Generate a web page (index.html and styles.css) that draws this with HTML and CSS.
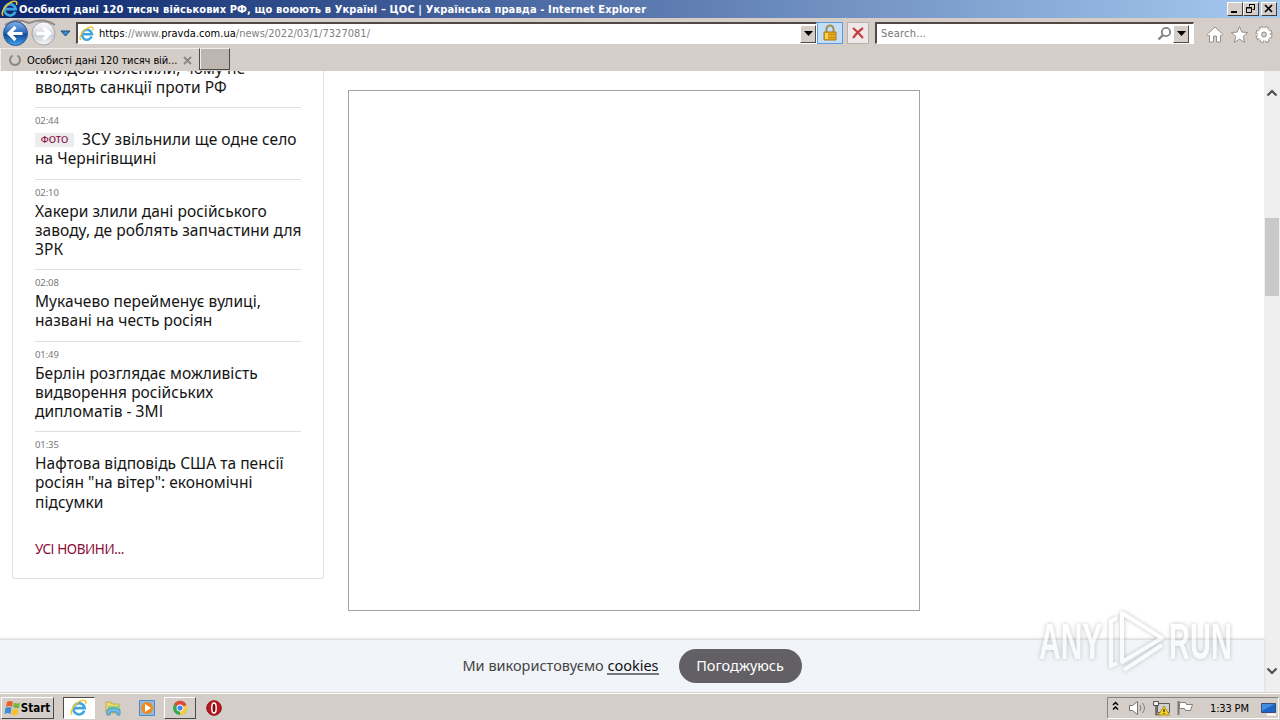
FILE: index.html
```html
<!DOCTYPE html>
<html lang="uk">
<head>
  <meta charset="UTF-8">
  <title>Особисті дані 120 тисяч військових РФ, що воюють в Україні – ЦОС | Українська правда</title>
  <link rel="stylesheet" href="styles.css">
</head>
<body>
  <svg class="defs" width="0" height="0">
    <defs>
      <linearGradient id="blueBall" x2="0" y2="1">
        <stop offset="0" stop-color="#7db1e8"/>
        <stop offset=".48" stop-color="#2a68bd"/>
        <stop offset=".52" stop-color="#114792"/>
        <stop offset="1" stop-color="#41a4ef"/>
      </linearGradient>
      <linearGradient id="greyBall" x2="0" y2="1">
        <stop offset="0" stop-color="#ffffff"/>
        <stop offset=".45" stop-color="#d9dce0"/>
        <stop offset=".6" stop-color="#c9cdd2"/>
        <stop offset="1" stop-color="#f8f9fa"/>
      </linearGradient>
      <symbol id="ie" viewBox="0 0 18 18">
        <path d="M14.3 11.8A5.6 5.6 0 1 1 14.6 9.2H4.5" fill="none" stroke="#3fa5e2" stroke-width="2.7"/>
        <path d="M2.2 15.8C-1 13 4.5 4.2 11 1.7c4-1.5 5.6.2 4.4 3.3" fill="none" stroke="#f2c62f" stroke-width="1.5"/>
      </symbol>
    </defs>
  </svg>

  <header class="titlebar">
    <svg class="title-ie" width="18" height="18"><use href="#ie"/></svg>
    <span class="title-text">Особисті дані 120 тисяч військових РФ, що воюють в Україні – ЦОС | Українська правда - Internet Explorer</span>
    <div class="win-buttons">
      <span class="win-btn"><svg width="13" height="11"><path d="M3 8h6v2H3z"/></svg></span>
      <span class="win-btn"><svg width="13" height="11" fill="none" stroke="#000"><path d="M5.5 3.5v-2h5v5h-2M5 1.5h6M2.5 4.5h5v5h-5zM2 5h6"/></svg></span>
      <span class="win-btn win-close"><svg width="13" height="11"><path d="M3 2l7 7M10 2l-7 7" stroke="#000" stroke-width="1.7"/></svg></span>
    </div>
  </header>

  <nav class="navbar">
    <svg class="nav-balls" width="72" height="30">
      <path d="M4 7Q15-1 28 5Q43-1 54 7" fill="none" stroke="#8f8a87" stroke-width="2"/>
      <circle cx="14.5" cy="15.5" r="12" fill="url(#blueBall)" stroke="#2b548e"/>
      <path d="M8 15.5h13.5M14.5 9L8 15.5l6.5 6.5" fill="none" stroke="#fff" stroke-width="3.2"/>
      <circle cx="42.5" cy="15.5" r="11.5" fill="url(#greyBall)" stroke="#9fa3a9"/>
      <path d="M35.5 15.5h13M42.5 9.5l6 6-6 6" fill="none" stroke="#fff" stroke-width="3.4"/>
      <path d="M60 13h9l-4.5 5z" fill="#3b8bc9" stroke="#174a7c"/>
    </svg>
    <div class="address">
      <svg width="16" height="16"><use href="#ie"/></svg>
      <span class="url">https<i>://www.</i>pravda.com.ua<i>/news/2022/03/1/7327081/</i></span>
      <span class="drop"><svg width="9" height="5"><path d="M0 0h9L4.5 5z"/></svg></span>
    </div>
    <div class="lock">
      <svg width="16" height="18"><path d="M4.5 9V5a3.5 3.5 0 0 1 7 0v4" fill="none" stroke="#a38c4d" stroke-width="2"/><path d="M2 8h12v8H2z" fill="#e5aa1d" stroke="#a87814"/><path d="M2 10.5h12M2 13.5h12" stroke="#c88d12"/><path d="M3 9h3v6H3z" fill="#f5cf58"/></svg>
    </div>
    <div class="stop">
      <svg width="14" height="14"><path d="M2 2q5 4 10 10M12 2Q6 6 2 12" fill="none" stroke="#c43d43" stroke-width="2.2"/></svg>
    </div>
    <div class="search">
      <span class="search-text">Search...</span>
      <svg width="16" height="16"><circle cx="9" cy="6" r="4.2" fill="none" stroke="#85817f" stroke-width="1.8"/><path d="M6 9L1.5 13.5" stroke="#85817f" stroke-width="2.4"/></svg>
      <span class="drop"><svg width="9" height="5"><path d="M0 0h9L4.5 5z"/></svg></span>
    </div>
    <svg class="tools" width="68" height="20" fill="#fff" stroke="#96918e">
      <path d="M1 10.5L9 3l8 7.5-1.5 1.5-1-1V18h-4v-6h-3v6h-4v-7l-1 1z"/>
      <path d="M33.5 2.5l2.3 5.6 6 .4-4.6 3.9 1.5 6-5.2-3.3-5.2 3.3 1.5-6-4.6-3.9 6-.4z"/>
      <circle cx="58" cy="10.5" r="6.3" stroke-width="4.6" stroke-dasharray="3.3 1.648"/>
      <circle cx="58" cy="10.5" r="6" stroke="#fff" stroke-width="3.2" stroke-dasharray="2 2.712" stroke-dashoffset="-.6"/>
      <circle cx="58" cy="10.5" r="5" stroke="#fff"/>
      <circle cx="58" cy="10.5" r="2.5" fill="#d5cec8"/>
    </svg>
  </nav>

  <div class="tabs">
    <div class="tab">
      <svg width="12" height="12"><path d="M3.5 1.7a5 5 0 1 0 5 0" fill="none" stroke="#8d8987" stroke-width="2"/></svg>
      <span class="tab-text">Особисті дані 120 тисяч вій...</span>
      <svg class="tab-close" width="9" height="9"><path d="M1 1l7 7M8 1L1 8" stroke="#8b8683" stroke-width="1.8"/></svg>
    </div>
    <div class="new-tab"></div>
  </div>

  <main class="viewport">
    <div class="page">
      <section class="news">
        <article>
          <h3>Молдові пояснили, чому не<br>вводять санкції проти РФ</h3>
        </article>
        <article>
          <time>02:44</time>
          <h3><b class="photo">ФОТО</b>ЗСУ звільнили ще одне село<br>на Чернігівщині</h3>
        </article>
        <article>
          <time>02:10</time>
          <h3>Хакери злили дані російського<br>заводу, де роблять запчастини для<br>ЗРК</h3>
        </article>
        <article>
          <time>02:08</time>
          <h3>Мукачево перейменує вулиці,<br>названі на честь росіян</h3>
        </article>
        <article>
          <time>01:49</time>
          <h3>Берлін розглядає можливість<br>видворення російських<br>дипломатів - ЗМІ</h3>
        </article>
        <article>
          <time>01:35</time>
          <h3>Нафтова відповідь США та пенсії<br>росіян "на вітер": економічні<br>підсумки</h3>
        </article>
        <a class="all-news">УСІ НОВИНИ...</a>
      </section>
      <div class="frame"></div>
    </div>
    <div class="scrollbar">
      <svg width="12" height="8"><path d="M1.5 6.5L6 2l4.5 4.5" fill="none" stroke="#505050" stroke-width="2.2"/></svg>
      <div class="thumb"></div>
      <svg class="down" width="12" height="8"><path d="M1.5 1.5L6 6l4.5-4.5" fill="none" stroke="#505050" stroke-width="2.2"/></svg>
    </div>
    <div class="cookies">
      <span class="cookie-text">Ми використовуємо <u>cookies</u></span>
      <button>Погоджуюсь</button>
    </div>
    <div class="watermark">
      <span class="any">ANY</span>
      <svg width="60" height="66" viewBox="0 0 60 66" fill="none" stroke="#fff" stroke-width="4" stroke-linejoin="round">
        <path d="M14 4L54 29 14 53z"/>
        <path d="M9 9L3 12V57L9 54M16 61L54 36"/>
      </svg>
      <span class="run">RUN</span>
    </div>
  </main>

  <footer class="taskbar">
    <div class="start">
      <svg width="18" height="18"><path d="M4 3q3-2 6 0L9 8Q6 6 3 8z" fill="#e9602b"/><path d="M11 3.5q3 2 6 0L16 9q-3 1-6-1z" fill="#78b644"/><path d="M2.5 9q3-2 6 0l-1 6q-3-2-6 0z" fill="#3d8bd1"/><path d="M9.5 9.5q3 2 6 0l-1 6q-3 2-6 0z" fill="#f4c22f"/></svg>
      <b>Start</b>
    </div>
    <div class="task active"><svg width="18" height="18"><use href="#ie"/></svg></div>
    <div class="task"><svg width="18" height="18"><path d="M2 3h5l1 2h7v9H2z" fill="#edd777" stroke="#c5a94b"/><path d="M4 7h12v3H4z" fill="#8dd07f"/><path d="M3 16v-5q6-4 13 0v5h-3v-3H6v3z" fill="#72bee2" stroke="#4a94bd"/></svg></div>
    <div class="task"><svg width="18" height="18"><path d="M1.5 1.5h15v15h-15z" fill="#8ebbe6" stroke="#5489bf"/><circle cx="9" cy="9" r="6" fill="#f18a1b"/><path d="M7 5l6 4-6 4z" fill="#fff"/></svg></div>
    <div class="task raised"><svg width="18" height="18"><circle cx="9" cy="9" r="7" fill="#34a853"/><path d="M9 9L3 5.3A7 7 0 0 1 15.5 6z" fill="#df4938"/><path d="M9 9l6.5-3A7 7 0 0 1 9 16z" fill="#f9cc3a"/><circle cx="9" cy="9" r="3.5" fill="#fff"/><circle cx="9" cy="9" r="2.6" fill="#4285f4"/></svg></div>
    <div class="task opera"><svg width="18" height="18"><circle cx="9" cy="9" r="7.3" fill="#bb1720" stroke="#85141a"/><ellipse cx="9" cy="9" rx="2.2" ry="5" fill="#7a0c12" stroke="#fff" stroke-width="1.5"/></svg></div>
    <div class="tray">
      <svg width="90" height="18" fill="none">
        <path d="M2 6l2.5-2.5L7 6M2 10.5L4.5 8 7 10.5" stroke="#000" stroke-width="1.5"/>
        <path d="M18.5 6.5h3l5-4v13l-5-4h-3z" fill="#fff" stroke="#77736f"/><path d="M29 6q2 3 0 6M31.5 4q4 5 0 10" stroke="#85817d"/>
        <path d="M46.5 4.5h12v9h-12z" fill="#cfd0cf" stroke="#5c5a58"/><path d="M42.5 2.5h5v4h-5z" fill="#eee" stroke="#555"/><path d="M45 7v8.500h5" stroke="#555" stroke-width="1.5"/><path d="M53 7l5.5 9h-11z" fill="#f4d22b" stroke="#b79610"/><path d="M53 10v3M53 14v1" stroke="#000"/>
        <path d="M67.5 2v14" stroke="#777" stroke-width="2"/><path d="M68.5 3.5h6l1 2h6l-2 6h-5l-1-2h-5z" fill="#fff" stroke="#84807d"/>
      </svg>
      <span class="clock">1:33 PM</span>
      <svg class="desktop" width="17" height="15"><path d="M1.5 2.5h14v9h-14z" fill="#1e66c5" stroke="#37507b"/><path d="M2 3h12L2 10z" fill="#438ee0"/><path d="M7 13.5h9" stroke="#fff" stroke-width="2"/></svg>
    </div>
  </footer>
</body>
</html>
```
FILE: styles.css
```css
* {
  box-sizing: border-box;
}

body {
  margin: 0;
  width: 1280px;
  height: 720px;
  overflow: hidden;
  display: flex;
  flex-direction: column;
  background: #d5cec8;
  font-family: "DejaVu Sans Condensed", "DejaVu Sans", sans-serif;
  font-stretch: condensed;
  font-size: 11px;
  color: #000;
}

svg {
  display: block;
  flex: none;
}

.defs {
  position: absolute;
}

.titlebar {
  height: 18px;
  flex: none;
  display: flex;
  align-items: center;
  padding: 0 3px 0 1px;
  color: #fff;
  background: linear-gradient(90deg, #0c276c, #a6caf0);
}

.title-text {
  font-weight: bold;
  letter-spacing: 0.13px;
  white-space: nowrap;
}

.win-buttons {
  display: flex;
  margin-left: auto;
}

.win-btn {
  width: 16px;
  height: 14px;
  background: #d5cec8;
  border: 1px solid;
  border-color: #fff #404040 #404040 #fff;
}

.win-close {
  margin-left: 2px;
}

.navbar {
  height: 30px;
  flex: none;
  display: flex;
  align-items: center;
  padding-left: 1px;
}

.address,
.search {
  height: 22px;
  display: flex;
  align-items: center;
  background: #fff;
  border: 1px solid #fff;
  border-top: 2px solid #504946;
  border-left: 2px solid #504946;
}

.address {
  width: 741px;
  margin-left: 3px;
  padding-left: 1px;
}

.url {
  margin-left: 4px;
  letter-spacing: 0.02px;
}

.url i {
  color: #808080;
  font-style: normal;
}

.drop {
  width: 16px;
  height: 18px;
  display: flex;
  align-items: center;
  justify-content: center;
  margin-left: auto;
  background: #d5cec8;
  border: 1px solid;
  border-color: #fff #504946 #504946 #fff;
}

.lock {
  width: 26px;
  height: 22px;
  display: flex;
  align-items: center;
  justify-content: center;
  background: #c4def8;
  border: 1px solid #5b9be2;
}

.stop {
  width: 22px;
  height: 22px;
  margin-left: 4px;
  display: flex;
  align-items: center;
  justify-content: center;
  background: #eee9e7;
  border: 1px solid #b8b2ae;
}

.search {
  width: 319px;
  margin-left: 6px;
  padding-left: 4px;
}

.search-text {
  color: #777;
  letter-spacing: 0.2px;
  margin-right: auto;
}

.search .drop {
  margin: 0 4px 0 0;
}

.tools {
  margin: 2px 0 0 12px;
}

.tabs {
  height: 23px;
  flex: none;
  display: flex;
}

.tab {
  width: 199px;
  display: flex;
  align-items: center;
  padding-left: 8px;
  border-top: 1px solid #f0eeeb;
  border-left: 1px solid #f0eeeb;
}

.tab-text {
  margin-left: 6px;
  letter-spacing: -0.1px;
  white-space: nowrap;
}

.tab-close {
  margin-left: 6px;
}

.new-tab {
  width: 31px;
  height: 22px;
  background: #bdb5b0;
  border: 1px solid #504946;
  border-top-color: #eee;
  box-shadow: inset 1px 0 #eee;
}

.viewport {
  height: 621px;
  flex: none;
  position: relative;
  display: flex;
  background: #fff;
  overflow: hidden;
}

.page {
  width: 1264px;
  display: flex;
  font-family: "Noto Sans", sans-serif;
  font-stretch: normal;
}

.news {
  width: 312px;
  height: 510px;
  margin: -2px 0 0 12px;
  padding: 0 22px;
  border: 1px solid #dedede;
  border-radius: 2px;
}

article {
  padding-top: 6px;
  padding-bottom: 10px;
  border-bottom: 1px solid #dedede;
}

article:first-child {
  padding-top: 0;
  margin-top: -11.3px;
}

article:nth-last-of-type(1) {
  border: 0;
}

time {
  display: block;
  height: 16px;
  font-size: 9.5px;
  line-height: 14px;
  letter-spacing: -0.1px;
  color: #777;
}

h3 {
  margin: 0;
  font-size: 15.5px;
  font-weight: 400;
  line-height: 19.2px;
  letter-spacing: 0.04px;
  white-space: nowrap;
  color: #151515;
}

.photo {
  display: inline-block;
  width: 39px;
  height: 14px;
  margin-right: 8px;
  vertical-align: 2px;
  background: #ececef;
  color: #8b0a38;
  font-size: 9.5px;
  font-weight: 500;
  line-height: 14px;
  text-align: center;
}

.all-news {
  display: block;
  margin-top: 17px;
  font-size: 13.5px;
  line-height: 20px;
  letter-spacing: -0.4px;
  color: #8b0a38;
}

.frame {
  width: 572px;
  height: 521px;
  margin: 19px 0 0 24px;
  border: 1px solid #a3a3a3;
}

.scrollbar {
  width: 16px;
  display: flex;
  flex-direction: column;
  align-items: center;
  padding: 18px 0 17px;
  background: #efefef;
}

.thumb {
  width: 14px;
  height: 78px;
  margin-top: 121px;
  background: #c9c9c9;
}

.down {
  margin-top: auto;
}

.cookies {
  position: absolute;
  left: 0;
  bottom: 0;
  width: 1264px;
  height: 53px;
  display: flex;
  align-items: center;
  justify-content: center;
  gap: 20px;
  background: #f1f4f8;
  border-top: 1px solid #dedfe1;
  box-shadow: 0 0 3px #ccc;
  font-family: "Noto Sans", sans-serif;
  font-stretch: normal;
  font-size: 14.5px;
  color: #444;
}

.cookie-text {
  margin-top: -2px;
}

.cookies u {
  display: inline-block;
  height: 19px;
  line-height: 18px;
  color: #111;
  text-decoration: none;
  border-bottom: 2px solid #777681;
}

.cookies button {
  width: 123px;
  height: 34px;
  padding: 0 0 2px;
  border: 0;
  border-radius: 17px;
  background: #626065;
  color: #fff;
  font: 14.5px "Noto Sans", sans-serif;
}

.watermark {
  position: absolute;
  left: 1039px;
  top: 537px;
  height: 68px;
  display: flex;
  align-items: center;
  font: bold 50px "Liberation Sans", sans-serif;
  color: #fff;
  opacity: 0.6;
  filter: drop-shadow(0 0 2px #999);
}

.watermark span {
  display: block;
  width: 69px;
  white-space: nowrap;
  transform: scaleX(0.6);
  transform-origin: left;
}

.watermark .run {
  margin-left: 1px;
  width: 63px;
  transform: scaleX(0.58);
}

.taskbar {
  height: 28px;
  flex: none;
  display: flex;
  align-items: center;
  padding: 3px 1px 0;
  border-top: 1px solid #d5d2cc;
  box-shadow: inset 0 1px #fff;
}

.start,
.task {
  height: 22px;
  display: flex;
  align-items: center;
  justify-content: center;
  flex: none;
}

.start {
  width: 53px;
  margin-right: 9px;
  padding-right: 2px;
  border: 1px solid;
  border-color: #fff #504946 #504946 #fff;
}

.start b {
  font-size: 11.5px;
}

.task {
  width: 34px;
}

.active {
  width: 32px;
  margin-right: 1px;
  background: #fff;
  border: 1px solid;
  border-color: #504946 #fff #fff #504946;
}

.raised {
  width: 32px;
  border: 1px solid;
  border-color: #fff #504946 #504946 #fff;
}

.opera {
  margin-left: 1px;
}

.tray {
  width: 172px;
  height: 22px;
  margin-left: auto;
  display: flex;
  align-items: center;
  padding: 0 1px 0 3px;
  border: 1px solid;
  border-color: #8a8581 #fff #fff #8a8581;
}

.clock {
  margin-left: 9px;
  letter-spacing: -0.15px;
  white-space: nowrap;
}

.desktop {
  margin-left: auto;
}
```
